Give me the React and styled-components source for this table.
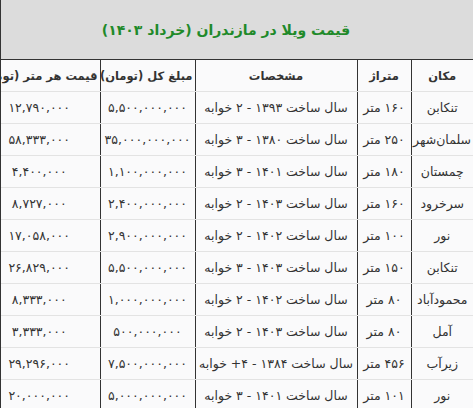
import React from "react";
import styled, { createGlobalStyle } from "styled-components";

const GlobalStyle = createGlobalStyle`
  html, body {
    margin: 0;
    padding: 0;
    background: #fafafb;
  }
`;

// clipping frame: the table is wider than the window and spills to the left
const Frame = styled.div`
  direction: rtl;
  width: 473px;
  height: 408px;
  overflow: hidden;
  box-sizing: border-box;
  border-left: 1px solid #333;
  background: #fafafb;
  font-family: "DejaVu Sans", sans-serif;
`;

const Table = styled.table`
  width: 494px;
  border-collapse: collapse;
  table-layout: fixed;
  color: #333;
`;

const TitleCell = styled.th`
  background: #dcdcdc;
  color: #1f8a2a;
  font-size: 14px;
  font-weight: bold;
  height: 59px;
  padding: 0;
  border-bottom: 1px solid #333;
  text-align: center;
`;

const HeadCell = styled.th`
  height: 31px;
  padding: 0 2px;
  font-size: 11.5px;
  font-weight: bold;
  text-align: center;
  white-space: nowrap;
  border-bottom: 1px solid #e3e3e3;
  border-left: ${(p) => (p.$last ? "none" : "1px solid #333")};
`;

const Cell = styled.td`
  height: 31px;
  padding: 0 2px;
  font-size: 12.5px;
  text-align: center;
  white-space: nowrap;
  border-bottom: 1px solid #e3e3e3;
  border-left: ${(p) => (p.$last ? "none" : "1px solid #333")};
`;

const columns = [
  { title: "مکان", width: 62 },
  { title: "متراژ", width: 54 },
  { title: "مشخصات", width: 162 },
  { title: "مبلغ کل (تومان)", width: 95 },
  { title: "قیمت هر متر (تومان)", width: 121 },
];

const rows = [
  ["تنکابن", "۱۶۰ متر", "سال ساخت ۱۳۹۳ - ۲ خوابه", "۵,۵۰۰,۰۰۰,۰۰۰", "۱۲,۷۹۰,۰۰۰"],
  ["سلمان‌شهر", "۲۵۰ متر", "سال ساخت ۱۳۸۰ - ۳ خوابه", "۳۵,۰۰۰,۰۰۰,۰۰۰", "۵۸,۳۳۳,۰۰۰"],
  ["چمستان", "۱۸۰ متر", "سال ساخت ۱۴۰۱ - ۳ خوابه", "۱,۱۰۰,۰۰۰,۰۰۰", "۴,۴۰۰,۰۰۰"],
  ["سرخرود", "۱۶۰ متر", "سال ساخت ۱۴۰۳ - ۲ خوابه", "۲,۴۰۰,۰۰۰,۰۰۰", "۸,۷۲۷,۰۰۰"],
  ["نور", "۱۰۰ متر", "سال ساخت ۱۴۰۲ - ۲ خوابه", "۲,۹۰۰,۰۰۰,۰۰۰", "۱۷,۰۵۸,۰۰۰"],
  ["تنکابن", "۱۵۰ متر", "سال ساخت ۱۴۰۳ - ۳ خوابه", "۵,۵۰۰,۰۰۰,۰۰۰", "۲۶,۸۲۹,۰۰۰"],
  ["محمودآباد", "۸۰ متر", "سال ساخت ۱۴۰۲ - ۲ خوابه", "۱,۰۰۰,۰۰۰,۰۰۰", "۸,۳۳۳,۰۰۰"],
  ["آمل", "۸۰ متر", "سال ساخت ۱۴۰۳ - ۲ خوابه", "۵۰۰,۰۰۰,۰۰۰", "۳,۳۳۳,۰۰۰"],
  ["زیرآب", "۴۵۶ متر", "سال ساخت ۱۳۸۴ - ۴+ خوابه", "۷,۵۰۰,۰۰۰,۰۰۰", "۲۹,۲۹۶,۰۰۰"],
  ["نور", "۱۰۱ متر", "سال ساخت ۱۴۰۱ - ۳ خوابه", "۵,۰۰۰,۰۰۰,۰۰۰", "۲۰,۰۰۰,۰۰۰"],
];

export default function App() {
  return (
    <>
      <GlobalStyle />
      <Frame>
        <Table>
          <colgroup>
            {columns.map((c) => (
              <col key={c.title} style={{ width: c.width }} />
            ))}
          </colgroup>
          <thead>
            <tr>
              <TitleCell colSpan={5}>قیمت ویلا در مازندران (خرداد ۱۴۰۳)</TitleCell>
            </tr>
            <tr>
              {columns.map((c, i) => (
                <HeadCell key={c.title} $last={i === columns.length - 1}>
                  {c.title}
                </HeadCell>
              ))}
            </tr>
          </thead>
          <tbody>
            {rows.map((r, ri) => (
              <tr key={ri}>
                {r.map((v, i) => (
                  <Cell key={i} $last={i === r.length - 1}>
                    {v}
                  </Cell>
                ))}
              </tr>
            ))}
          </tbody>
        </Table>
      </Frame>
    </>
  );
}
